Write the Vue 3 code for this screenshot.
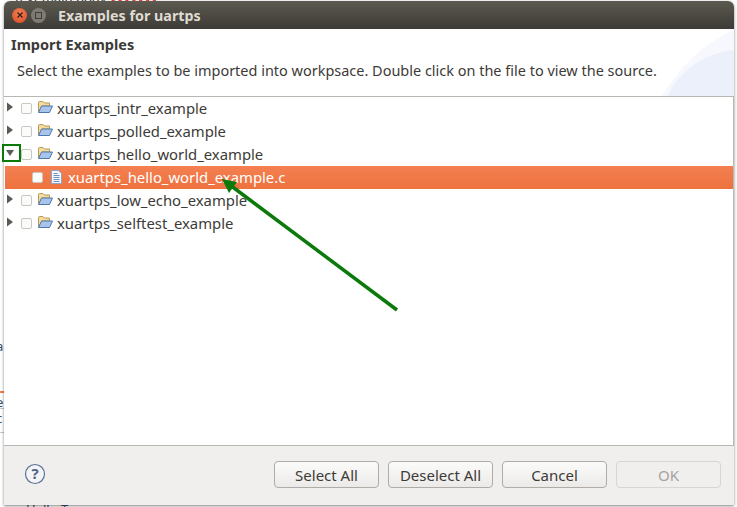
<script setup>
const rows = [
  { name: 'xuartps_intr_example', type: 'folder' },
  { name: 'xuartps_polled_example', type: 'folder' },
  { name: 'xuartps_hello_world_example', type: 'folder', open: true },
  { name: 'xuartps_hello_world_example.c', type: 'file' },
  { name: 'xuartps_low_echo_example', type: 'folder' },
  { name: 'xuartps_selftest_example', type: 'folder' }
]
const buttons = ['Select All', 'Deselect All', 'Cancel', 'OK']
</script>

<template>
  <div class="desktop">
    <div class="behind-top">text main body <span class="red">xxxxxxx</span></div>
    <span class="frag a">a</span>
    <span class="frag orange"></span>
    <span class="frag e">e</span>
    <span class="frag rule one"></span>
    <span class="frag c">c</span>
    <span class="frag rule two"></span>
    <div class="behind-bottom">Hello Top</div>

    <div class="dialog">
      <div class="titlebar">
        <span class="winbtn close">
          <svg width="8" height="8" viewBox="0 0 8 8"><path d="M1.5 1.5l5 5M6.5 1.5l-5 5" stroke="#3c1a10" stroke-width="1.3" /></svg>
        </span>
        <span class="winbtn max"><i></i></span>
        <span class="title">Examples for uartps</span>
      </div>

      <div class="header">
        <svg class="swoosh" width="74" height="67" viewBox="0 0 74 67">
          <path d="M2 67C14 50 27 25 74 0V67Z" fill="#f6f8fd" />
          <path d="M8 67C17 45 42 24 74 21V67Z" fill="#ebf0fb" />
        </svg>
        <div class="heading">Import Examples</div>
        <div class="desc">Select the examples to be imported into workpsace. Double click on the file to view the source.</div>
      </div>

      <div class="tree">
        <div v-for="row in rows" :key="row.name" class="row" :class="{ selected: row.type === 'file' }">
          <svg v-if="row.type === 'folder'" class="twisty" width="8" height="10" viewBox="0 0 8 10">
            <path v-if="row.open" d="M0 2H8L4 8Z" fill="#5c5a55" />
            <path v-else d="M1 0.5L7 5L1 9.5Z" fill="#5c5a55" />
          </svg>
          <span class="check"></span>
          <svg v-if="row.type === 'folder'" class="icon" width="16" height="14" viewBox="0 0 16 14">
            <path d="M1.5 12V2.5Q1.5 1.5 2.5 1.5H6L7.5 3H12.5V6H5L1.5 12Z" fill="#f5dc9c" stroke="#b59a5a" />
            <path d="M1.5 12.5L4.6 6H15.5L12.5 12.5Z" fill="#a9c4ea" stroke="#4f78ae" stroke-linejoin="round" />
          </svg>
          <svg v-else class="icon file" width="11" height="14" viewBox="0 0 11 14">
            <path d="M.5.5H7.5L10.5 3.5V13.5H.5Z" fill="#f4f7fc" stroke="#8fa5c6" />
            <path d="M2.5 3.5H6.5M2.5 5.5H8.5M2.5 7.5H8.5M2.5 9.5H8.5M2.5 11.5H8.5" stroke="#6f8fbd" />
          </svg>
          <span class="label">{{ row.name }}</span>
        </div>
      </div>

      <div class="footer">
        <svg class="help" width="22" height="22" viewBox="0 0 22 22">
          <circle cx="11" cy="11" r="9.5" fill="#f3f4f6" stroke="#5d7397" stroke-width="1.2" />
          <text x="11" y="16" text-anchor="middle" class="help-mark">?</text>
        </svg>
        <div class="buttons">
          <button v-for="b in buttons" :key="b" :class="{ off: b === 'OK' }">{{ b }}</button>
        </div>
      </div>
    </div>

    <svg class="marks" width="737" height="507" viewBox="0 0 737 507">
      <rect x="3" y="145" width="17" height="16" fill="none" stroke="#0b7a0b" stroke-width="2" />
      <path d="M397 310L230 185" stroke="#0b7a0b" stroke-width="3.5" fill="none" />
      <path d="M222 179L237 182L229 193Z" fill="#0b7a0b" />
    </svg>
  </div>
</template>

<style scoped>
.desktop {
  position: relative;
  width: 737px;
  height: 507px;
  overflow: hidden;
  background: #fff;
  font-family: "Noto Sans", sans-serif;
  color: #3c3b37;
}
.behind-top {
  position: absolute;
  top: -9px;
  left: 15px;
  font-size: 13px;
  line-height: 14px;
  color: #333;
}
.red {
  color: #e02020;
}
.behind-bottom {
  position: absolute;
  left: 26px;
  top: 502px;
  font-size: 13px;
  line-height: 14px;
  color: #3f4f70;
}
.frag {
  position: absolute;
  left: -4px;
  font-size: 13px;
  line-height: 12px;
  color: #3f4f70;
}
.a { top: 340px; }
.e { top: 396px; }
.c { top: 412px; }
.orange {
  top: 391px;
  left: 0;
  width: 4px;
  height: 2px;
  background: #f47b4a;
}
.rule {
  left: 0;
  width: 4px;
  height: 1px;
  background: #c9c7c2;
}
.one { top: 408px; }
.two { top: 432px; }
.dialog {
  position: absolute;
  left: 4px;
  top: 1px;
  width: 730px;
  height: 504px;
  display: flex;
  flex-direction: column;
  background: #fff;
  border-radius: 6px 6px 0 0;
  box-shadow: 0 1px 3px rgba(0, 0, 0, 0.5);
}
.titlebar {
  height: 28px;
  flex: none;
  display: flex;
  align-items: center;
  padding-left: 8px;
  background: linear-gradient(#5c5950, #3d3b36);
  border-radius: 6px 6px 0 0;
}
.winbtn {
  width: 15px;
  height: 15px;
  border-radius: 50%;
  display: flex;
  align-items: center;
  justify-content: center;
}
.close {
  background: radial-gradient(circle at 50% 35%, #f3815a, #d9481c);
}
.max {
  margin-left: 4px;
  background: #7d7b73;
}
.max i {
  width: 7px;
  height: 7px;
  border: 1px solid #3f3d38;
  box-sizing: border-box;
}
.title {
  margin-left: 12px;
  font-size: 14.3px;
  font-weight: 700;
  color: #dfdbd2;
}
.header {
  position: relative;
  height: 67px;
  flex: none;
  border-bottom: 1px solid #b9b7b1;
}
.swoosh {
  position: absolute;
  right: 0;
  top: 0;
}
.heading {
  position: relative;
  padding: 7px 0 0 7px;
  font-size: 14.5px;
  line-height: 17px;
  font-weight: 700;
}
.desc {
  position: relative;
  padding: 8px 0 0 13px;
  font-size: 14.47px;
  line-height: 19px;
}
.tree {
  flex: 1;
  margin-left: 1px;
  border-right: 1px solid #b9b7b1;
}
.row {
  position: relative;
  height: 23px;
  display: flex;
  align-items: center;
  padding-left: 16px;
  font-size: 14.85px;
}
.twisty {
  position: absolute;
  left: 1px;
  top: 5px;
}
.check {
  width: 11px;
  height: 11px;
  box-sizing: border-box;
  border: 1px solid #c9c7c2;
  border-radius: 2px;
  background: #fbfbfa;
}
.icon {
  margin-left: 5px;
  margin-bottom: 3px;
}
.label {
  margin-left: 4px;
  margin-bottom: 2px;
}
.selected {
  padding-left: 27px;
  background: linear-gradient(#f47f50, #ee7240);
  color: #fff;
}
.selected .file {
  margin-left: 8px;
  margin-bottom: 1px;
}
.selected .label {
  margin-left: 6px;
}
.footer {
  height: 60px;
  flex: none;
  display: flex;
  align-items: flex-start;
  justify-content: space-between;
  padding: 15px 13px 0 20px;
  box-sizing: border-box;
  background: #f0efed;
  border-top: 1px solid #b9b7b1;
}
.help {
  margin-top: 2px;
}
.help-mark {
  font-size: 15px;
  font-weight: 700;
  fill: #4f6488;
  font-family: "Noto Sans", sans-serif;
}
.buttons {
  display: flex;
  gap: 9px;
}
button {
  width: 105px;
  height: 27px;
  padding: 0;
  font-family: inherit;
  font-size: 15px;
  color: #3c3b37;
  background: linear-gradient(#fbfbfa, #ebeae8);
  border: 1px solid #aeaca6;
  border-radius: 4px;
}
button.off {
  color: #a5a39e;
  background: #f0efed;
  border-color: #d8d6d2;
}
.marks {
  position: absolute;
  left: 0;
  top: 0;
  pointer-events: none;
}
</style>

<style>
html, body {
  background: #fff;
}
</style>
